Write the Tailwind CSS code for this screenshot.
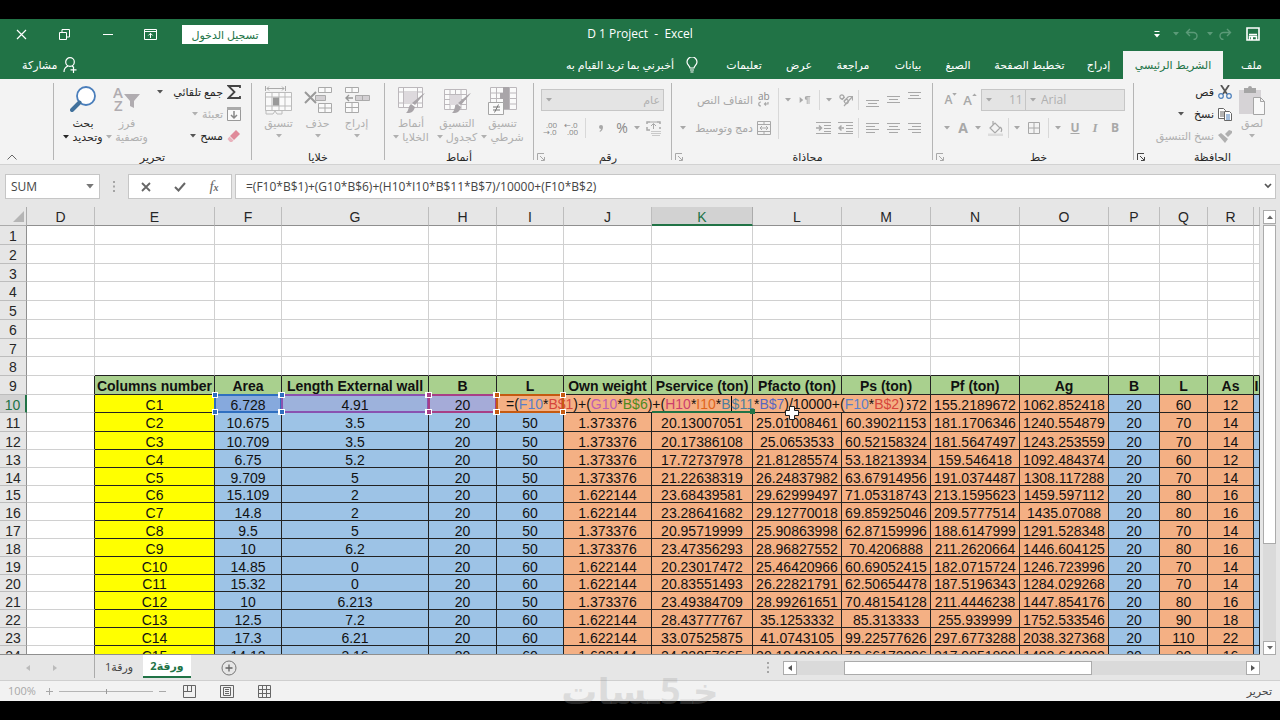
<!DOCTYPE html>
<html lang="ar">
<head>
  <meta charset="UTF-8">
  <meta name="viewport" content="width=device-width, initial-scale=1.0">
  <title>D 1 Project - Excel</title>
  <script src="https://cdn.jsdelivr.net/npm/@tailwindcss/browser@4"></script>
</head>
<body class="bg-black font-['Open_Sans','Noto_Sans','DejaVu_Sans',sans-serif] text-[11px] text-[#262626]">

<!-- Shared icons -->
<svg class="hidden">
  <symbol id="caret" viewBox="0 0 6 4"><path d="M0 0h6L3 3.5z" fill="currentColor"/></symbol>
  <symbol id="launcher" viewBox="0 0 8 8"><path d="M.5 7V.5H7M3 3l4 4M7.500 4v3.500H4" fill="none" stroke="currentColor"/></symbol>
</svg>

<div class="relative flex h-screen flex-col overflow-hidden py-[19px]">

  <!-- Title bar -->
  <header class="shrink-0 bg-[#217346] text-white">
    <div class="flex h-[30px] items-center">
      <div class="flex flex-1 items-center">
        <button class="flex w-[43px] justify-center" aria-label="Close"><svg class="size-[11px]" viewBox="0 0 11 11"><path d="M1 1l9 9M10 1l-9 9" stroke="currentColor" stroke-width="1.200"/></svg></button>
        <button class="flex w-[43px] justify-center" aria-label="Restore"><svg class="size-[11px]" viewBox="0 0 11 11"><path d="M.5 3.500h7v7h-7zM3 3.500V.5h7.500V8H7.500" fill="none" stroke="currentColor"/></svg></button>
        <button class="flex w-[43px] justify-center" aria-label="Minimize"><svg class="h-[11px] w-[10px]" viewBox="0 0 10 11"><path d="M0 5.500h10" stroke="currentColor"/></svg></button>
        <button class="flex w-[43px] justify-center" aria-label="Ribbon options"><svg class="h-[11px] w-[13px]" viewBox="0 0 13 11"><path d="M.5.5h12v10H.5zM.5 2.500h12M6.500 9V4.500M4.300 6.500l2.200-2.200 2.200 2.200" fill="none" stroke="currentColor"/></svg></button>
        <button class="ml-[10px] h-[19px] w-[86px] bg-white text-[11px] leading-[17px] text-[#217346]" dir="rtl">تسجيل الدخول</button>
      </div>
      <h1 class="whitespace-pre text-[12px]">D 1 Project  -  Excel</h1>
      <div class="flex flex-1 items-center" dir="rtl">
        <button class="mr-[20px] flex w-[14px] justify-center" aria-label="Save"><svg class="size-[14px]" viewBox="0 0 14 14"><path d="M1 1h12v12H1z" fill="none" stroke="currentColor" stroke-width="1.600"/><path d="M3 7.500h8M3.500 13V9.500h7V13" fill="none" stroke="currentColor" stroke-width="1.500"/><path d="M5 10h2v3H5z" fill="currentColor"/></svg></button>
        <button class="mr-[14px] flex w-[14px] justify-center text-[#5b9a78]" aria-label="Redo"><svg class="h-[12px] w-[14px]" viewBox="0 0 14 12"><path d="M12.500 4.500H5.500a3.500 3.500 0 0 0 0 7M9 1l3.500 3.500L9 8" fill="none" stroke="currentColor" stroke-width="1.400"/></svg></button>
        <svg class="mr-[5px] h-[4px] w-[6px] text-[#5b9a78]"><use href="#caret"/></svg>
        <button class="mr-[8px] flex w-[14px] justify-center text-[#5b9a78]" aria-label="Undo"><svg class="h-[12px] w-[14px]" viewBox="0 0 14 12"><path d="M1.500 4.500h7a3.500 3.500 0 0 1 0 7M5 1L1.500 4.500 5 8" fill="none" stroke="currentColor" stroke-width="1.400"/></svg></button>
        <svg class="mr-[6px] h-[4px] w-[6px] text-[#5b9a78]"><use href="#caret"/></svg>
        <button class="mr-[13px]" aria-label="Customize"><svg class="h-[7px] w-[6px]" viewBox="0 0 6 7"><path d="M.5.5h5" stroke="currentColor"/><path d="M0 3h6L3 6.500z" fill="currentColor"/></svg></button>
      </div>
    </div>

    <!-- Ribbon tabs -->
    <nav class="flex h-[30px] items-end text-[11px]" dir="rtl">
      <button class="h-[28px] w-[57px]">ملف</button>
      <button class="h-[28px] w-[100px] bg-[#f3f3f3] text-[#217346]">الشريط الرئيسي</button>
      <button class="h-[28px] w-[49px]">إدراج</button>
      <button class="h-[28px] w-[89px]">تخطيط الصفحة</button>
      <button class="h-[28px] w-[54px]">الصيغ</button>
      <button class="h-[28px] w-[46px]">بيانات</button>
      <button class="h-[28px] w-[64px]">مراجعة</button>
      <button class="h-[28px] w-[44px]">عرض</button>
      <button class="h-[28px] w-[66px]">تعليمات</button>
      <button class="flex h-[28px] items-center gap-[12px] pr-[13px]">
        <svg class="h-[16px] w-[12px]" viewBox="0 0 12 16"><path d="M4 11c0-2-3-3-3-6a5 5 0 0 1 10 0c0 3-3 4-3 6zM4 13h4M4.500 15h3" fill="none" stroke="currentColor" stroke-width="1.200"/></svg>
        أخبرني بما تريد القيام به
      </button>
      <button class="mr-auto flex h-[28px] items-center gap-[5px] pl-[22px]">
        <svg class="h-[16px] w-[14px]" viewBox="0 0 14 16"><circle cx="7" cy="5" r="4.300" fill="none" stroke="currentColor" stroke-width="1.200"/><path d="M1 15c0-3 1.500-5 4-6M9 9l2 1.500M10.500 10v6M7.500 12.800h6" fill="none" stroke="currentColor" stroke-width="1.200"/></svg>
        مشاركة
      </button>
    </nav>
  </header>

  <!-- Ribbon -->
  <section class="flex h-[86px] shrink-0 border-b border-[#d2d2d2] bg-[#f3f3f3] leading-[14px]" dir="rtl">

    <!-- Clipboard -->
    <div class="flex w-[146px] flex-col">
      <div class="flex h-[71px] pr-[8px]">
        <button class="flex w-[40px] flex-col items-center pt-[7px] text-[#b0b0b0]">
          <svg class="h-[30px] w-[28px]" viewBox="0 0 28 30"><path d="M1 4h22v24H1z" fill="#d6d3d6"/><path d="M6 2h4a2 2 0 0 1 4 0h4v5H6z" fill="#a5a5a5"/><path d="M15.500 11.500h7l4 4v13h-11zM22.500 11.500v4h4" fill="#f8f8f8" stroke="#a5a5a5"/></svg>
          لصق
          <svg class="mt-[4px] h-[4px] w-[6px]"><use href="#caret"/></svg>
        </button>
        <div class="flex flex-col pt-[2px]">
          <button class="flex h-[22px] items-center gap-[4px]">
            <svg class="h-[14px] w-[14px]" viewBox="0 0 14 14"><path d="M3 0l6 9M11 0L5 9" stroke="#555" stroke-width="1.800"/><circle cx="3" cy="11" r="2.300" fill="none" stroke="#4a7ebb" stroke-width="1.200"/><circle cx="11" cy="11" r="2.300" fill="none" stroke="#4a7ebb" stroke-width="1.200"/></svg>
            قص
          </button>
          <button class="flex h-[22px] items-center gap-[4px]">
            <svg class="h-[13px] w-[14px]" viewBox="0 0 14 13"><path d="M.5.5h5l2 2v8h-7zM2 4h4M2 6h4M2 8h4" fill="#fff" stroke="#666"/><path d="M6.500 3.500h5l2 2v7h-7z" fill="#fff" stroke="#666"/><path d="M8 7h4M8 9h4M8 11h4" stroke="#4a7ebb"/></svg>
            نسخ
            <svg class="mr-[6px] h-[4px] w-[6px] text-[#555]"><use href="#caret"/></svg>
          </button>
          <button class="flex h-[22px] items-center gap-[4px] text-[#b0b0b0]">
            <svg class="h-[13px] w-[14px]" viewBox="0 0 14 13"><path d="M14 1l-3-1-4 4 3 3 4-4zM0 5l3-2 7 6-3 4z" fill="currentColor"/></svg>
            نسخ التنسيق
          </button>
        </div>
      </div>
      <div class="flex h-[14px] items-center pl-[3px]"><span class="flex-1 text-center">الحافظة</span><svg class="size-[8px] text-[#444]"><use href="#launcher"/></svg></div>
    </div>
    <div class="my-[4px] w-px bg-[#b5b5b5]"></div>

    <!-- Font -->
    <div class="flex w-[200px] flex-col text-[#a8a8a8]">
      <div class="h-[71px] pt-[7px] pr-[8px]" dir="rtl">
        <div class="flex h-[28px] items-center">
          <label class="relative w-[100px]" dir="ltr"><select aria-label="Font" class="h-[22px] w-full appearance-none border border-[#c6c6c6] bg-[#e4e4e4] pl-[15px] text-[12px] text-[#b0b0b0]"><option>Arial</option></select><svg class="absolute top-[9px] left-[5px] h-[4px] w-[6px]"><use href="#caret"/></svg></label>
          <label class="relative w-[44px]" dir="ltr"><select aria-label="Size" class="h-[22px] w-full appearance-none border border-r-0 border-[#c6c6c6] bg-[#e4e4e4] pl-[27px] text-[12px] text-[#b0b0b0]"><option>11</option></select><svg class="absolute top-[9px] left-[5px] h-[4px] w-[6px]"><use href="#caret"/></svg></label>
          <button class="mr-[2px] flex w-[18px] items-start justify-center text-[13px] font-semibold" dir="ltr">A<svg class="h-[3px] w-[5px] rotate-180"><use href="#caret"/></svg></button>
          <button class="flex w-[20px] items-start justify-center text-[12px] font-semibold" dir="ltr">A<svg class="h-[3px] w-[5px]"><use href="#caret"/></svg></button>
        </div>
        <div class="flex h-[28px] items-center text-[12px]">
          <button class="w-[20px] font-bold">B</button>
          <button class="w-[20px] font-['Liberation_Serif',serif] text-[13px] font-bold italic">I</button>
          <button class="w-[20px] font-bold underline">U</button>
          <span class="flex w-[14px] justify-center"><svg class="h-[4px] w-[6px]"><use href="#caret"/></svg></span>
          <span class="mx-[2px] h-[20px] w-px bg-[#d8d8d8]"></span>
          <button class="flex w-[24px] justify-center" aria-label="Borders"><svg class="size-[12px]" viewBox="0 0 12 12"><path d="M.5.5h11v11H.5zM6 0v12M0 6h12" fill="none" stroke="currentColor"/></svg></button>
          <span class="flex w-[10px] justify-center"><svg class="h-[4px] w-[6px]"><use href="#caret"/></svg></span>
          <span class="mx-[3px] h-[20px] w-px bg-[#d8d8d8]"></span>
          <button class="flex w-[20px] justify-center" aria-label="Fill"><svg class="h-[15px] w-[15px]" viewBox="0 0 15 15"><path d="M2 7l5-5 5 5-5 5zM5 4V0M12 6c2 1 2 3 1 5" fill="none" stroke="currentColor" stroke-width="1.200"/><path d="M0 12.500h15V15H0z" fill="#dcdcdc"/></svg></button>
          <span class="flex w-[14px] justify-center"><svg class="h-[4px] w-[6px]"><use href="#caret"/></svg></span>
          <button class="w-[16px] text-[14px] font-bold">A</button>
          <span class="flex w-[16px] justify-center"><svg class="h-[4px] w-[6px]"><use href="#caret"/></svg></span>
        </div>
      </div>
      <div class="flex h-[14px] items-center pl-[3px]"><span class="flex-1 text-center text-[#262626]">خط</span><svg class="size-[8px]"><use href="#launcher"/></svg></div>
    </div>
    <div class="my-[4px] w-px bg-[#b5b5b5]"></div>

    <!-- Alignment -->
    <div class="flex w-[260px] flex-col text-[#a8a8a8]">
      <div class="flex h-[71px] pt-[7px] pr-[7px]">
        <div>
          <div class="flex h-[28px] items-center">
            <button class="flex w-[21px] justify-center pb-[8px]" aria-label="Top"><svg class="h-[8px] w-[13px]" viewBox="0 0 13 8"><path d="M0 .5h13M2 3.500h9M0 6.500h13" stroke="currentColor"/></svg></button>
            <button class="flex w-[21px] justify-center" aria-label="Middle"><svg class="h-[8px] w-[13px]" viewBox="0 0 13 8"><path d="M0 .5h13M2 3.500h9M0 6.500h13" stroke="currentColor"/></svg></button>
            <button class="flex w-[21px] justify-center pt-[8px]" aria-label="Bottom"><svg class="h-[8px] w-[13px]" viewBox="0 0 13 8"><path d="M0 .5h13M2 3.500h9M0 6.500h13" stroke="currentColor"/></svg></button>
            <span class="mr-[3px] ml-[2px] h-[20px] w-px bg-[#d8d8d8]"></span>
            <button class="flex w-[22px] justify-center" aria-label="Orientation"><svg class="h-[14px] w-[15px]" viewBox="0 0 15 14"><path d="M6 13l8-9M10.500 3.500h4V7.500" fill="none" stroke="currentColor" stroke-width="1.200"/><g transform="rotate(45 6 6)"><circle cx="3" cy="6" r="2" fill="none" stroke="currentColor" stroke-width="1.200"/><path d="M5 4v4M7.500 1v7" stroke="currentColor" stroke-width="1.200"/><circle cx="9.500" cy="6" r="2" fill="none" stroke="currentColor" stroke-width="1.200"/></g></svg></button>
            <span class="flex w-[10px] justify-center"><svg class="h-[4px] w-[6px]"><use href="#caret"/></svg></span>
            <span class="mr-[4px] ml-[3px] h-[20px] w-px bg-[#d8d8d8]"></span>
            <button class="flex w-[22px] justify-center" aria-label="Direction"><svg class="h-[8px] w-[12px]" viewBox="0 0 12 9"><path d="M0 1l4 3.500L0 8zM8 0a2.200 2.200 0 0 0 0 4.500z" fill="currentColor"/><path d="M8.500 0v9M10.500 0v9M8 .5h4" stroke="currentColor"/></svg></button>
            <span class="flex w-[12px] justify-center"><svg class="h-[4px] w-[6px]"><use href="#caret"/></svg></span>
          </div>
          <div class="flex h-[28px] items-center">
            <button class="flex w-[21px] justify-center" aria-label="Right"><svg class="h-[11px] w-[13px]" viewBox="0 0 13 11"><path d="M0 .5h13M4 3.500h9M0 6.500h13M4 9.500h9" stroke="currentColor"/></svg></button>
            <button class="flex w-[21px] justify-center" aria-label="Center"><svg class="h-[11px] w-[13px]" viewBox="0 0 13 11"><path d="M0 .5h13M2 3.500h9M0 6.500h13M2 9.500h9" stroke="currentColor"/></svg></button>
            <button class="flex w-[21px] justify-center" aria-label="Left"><svg class="h-[11px] w-[13px]" viewBox="0 0 13 11"><path d="M0 .5h13M0 3.500h9M0 6.500h13M0 9.500h9" stroke="currentColor"/></svg></button>
            <span class="mr-[3px] ml-[2px] h-[20px] w-px bg-[#d8d8d8]"></span>
            <button class="flex w-[22px] justify-center" aria-label="Decrease indent"><svg class="h-[12px] w-[15px]" viewBox="0 0 15 12"><path d="M0 .5h15M8 3.500h7M8 6.500h7M8 9.500h7M0 11.500h15" fill="none" stroke="currentColor"/><path d="M1 6h5M3.500 3.500L1 6l2.500 2.500" fill="none" stroke="currentColor" stroke-width="1.500"/></svg></button>
            <button class="flex w-[22px] justify-center" aria-label="Increase indent"><svg class="h-[12px] w-[15px]" viewBox="0 0 15 12"><path d="M0 .5h15M8 3.500h7M8 6.500h7M8 9.500h7M0 11.500h15" fill="none" stroke="currentColor"/><path d="M0 6h5M3 3.500L5.500 6 3 8.500" fill="none" stroke="currentColor" stroke-width="1.500"/></svg></button>
          </div>
        </div>
        <div class="mx-[3px] mt-[2px] h-[51px] w-px bg-[#d8d8d8]"></div>
        <div>
          <button class="flex h-[28px] items-center gap-[4px] pr-[4px]">
            <svg class="h-[16px] w-[14px]" viewBox="0 0 14 16"><text x="1" y="8" font-size="10" direction="ltr" fill="#8a8a8a">ab</text><path d="M4 10c-3 0-3 4 0 4M11 10v2H8M9 10.500L7.500 12 9 13.500" fill="none" stroke="currentColor" stroke-width="1.200"/></svg>
            التفاف النص
          </button>
          <button class="flex h-[28px] items-center gap-[4px] pr-[4px]">
            <svg class="h-[14px] w-[14px]" viewBox="0 0 14 14"><path d="M.5.5h13v13H.5zM0 3.500h14M0 10.500h14M7 0v4M7 10v4M3 7h8M5 5L3 7l2 2M9 5l2 2-2 2" fill="none" stroke="currentColor"/></svg>
            دمج وتوسيط
            <svg class="mr-[5px] h-[4px] w-[6px]"><use href="#caret"/></svg>
          </button>
        </div>
      </div>
      <div class="flex h-[14px] items-center pl-[3px]"><span class="flex-1 text-center text-[#262626]">محاذاة</span><svg class="size-[8px]"><use href="#launcher"/></svg></div>
    </div>
    <div class="my-[4px] w-px bg-[#b5b5b5]"></div>

    <!-- Number -->
    <div class="flex w-[137px] flex-col text-[#a8a8a8]">
      <div class="h-[71px] pt-[7px] pr-[7px]">
        <div class="flex h-[28px] items-center">
          <label class="relative w-[123px]"><select aria-label="Number format" class="h-[22px] w-full appearance-none border border-[#c6c6c6] bg-[#e4e4e4] pr-[3px] text-[11px] text-[#b0b0b0]"><option>عام</option></select><svg class="absolute top-[9px] left-[5px] h-[4px] w-[6px]"><use href="#caret"/></svg></label>
        </div>
        <div class="flex h-[28px] items-center">
          <button class="flex w-[22px] justify-center" aria-label="Currency"><svg class="h-[15px] w-[15px]" viewBox="0 0 15 15"><path d="M4 1H1v2M11 1h3v2M1 6v3h3M14 6v2" fill="none" stroke="currentColor" stroke-width="1.500"/><path d="M7.500 3v5M5 5l2.500-2.500L10 5M4 1h7" fill="none" stroke="currentColor"/><path d="M5 10.500h10M5 12.500h10M6 14.500h8" stroke="#c9c9c9"/></svg></button>
          <span class="flex w-[10px] justify-center"><svg class="h-[4px] w-[6px]"><use href="#caret"/></svg></span>
          <button class="w-[20px] text-[14px] text-[#888]">%</button>
          <button class="flex w-[22px] justify-center" aria-label="Comma style"><svg class="h-[7px] w-[4px]" viewBox="0 0 4 7"><path d="M2 0a2 2 0 0 1 2 2c0 2-1 4-3 5L.5 6C1.500 5.500 2 4.800 2 4a2 2 0 0 1 0-4z" fill="currentColor"/></svg></button>
          <span class="mr-[4px] ml-[3px] h-[20px] w-px bg-[#d8d8d8]"></span>
          <button class="flex w-[22px] flex-col items-center text-[8px] leading-[7px] text-[#888]" dir="ltr"><span>←.0</span><span class="pl-[3px]">.00</span></button>
          <button class="flex w-[20px] flex-col items-center text-[8px] leading-[7px] text-[#888]" dir="ltr"><span class="pl-[3px]">.00</span><span>→.0</span></button>
        </div>
      </div>
      <div class="flex h-[14px] items-center pl-[3px]"><span class="flex-1 text-center text-[#262626]">رقم</span><svg class="size-[8px]"><use href="#launcher"/></svg></div>
    </div>
    <div class="my-[4px] w-px bg-[#b5b5b5]"></div>

    <!-- Styles -->
    <div class="flex w-[148px] flex-col">
      <div class="flex h-[71px] pr-[8px] text-[#b0b0b0]">
        <button class="flex w-[45px] flex-col items-center pt-[7px]">
          <svg class="h-[30px] w-[29px]" viewBox="0 0 29 30"><path d="M2.500 1.500h26v22h-26zM8.500 1v23M15.500 1v23M21.500 1v23M2 7h26M2 12.500h26M2 18h26" fill="#fafafa" stroke="#bcb8bc"/><path d="M15 1h6v6h-6zM12 7h9v6h-9zM15 13h6v10h-6z" fill="#a9a5a9"/><path d="M.5 16.500h15v12H.5z" fill="#fafafa" stroke="#a5a5a5"/><path d="M5 21h7M5 24h7M10.500 18.500l-4 8" stroke="#777"/></svg>
          <span>تنسيق</span>
          <span class="flex items-center gap-[3px] whitespace-nowrap">شرطي<svg class="h-[4px] w-[6px]"><use href="#caret"/></svg></span>
        </button>
        <button class="flex w-[46px] flex-col items-center pt-[7px]">
          <svg class="h-[30px] w-[29px]" viewBox="0 0 29 30"><path d="M1.500 3.500h22v20h-22zM1 8.500h23M1 13.500h23M1 18.500h23M7 3v21M12.500 3v21M18 3v21" fill="#fafafa" stroke="#bcb8bc"/><path d="M7 9h11v10H7z" fill="#ddd9dd"/><path d="M28 7l-10 12-3-2L26 8zM14 18l4 3c-2 7-6 6-9 6 3-2 2-7 5-9z" fill="#a9a5a9"/></svg>
          <span>التنسيق</span>
          <span class="flex items-center gap-[3px] whitespace-nowrap">كجدول<svg class="h-[4px] w-[6px]"><use href="#caret"/></svg></span>
        </button>
        <button class="flex w-[46px] flex-col items-center pt-[7px]">
          <svg class="h-[30px] w-[29px]" viewBox="0 0 29 30"><path d="M1.500 1.500h24v20h-24zM1 6h25M1 17h25M6.500 1v21M20.500 1v21" fill="#fafafa" stroke="#bcb8bc"/><path d="M7 6h13v11H7z" fill="#ddd9dd"/><path d="M28 7l-10 12-3-2L26 8zM14 18l4 3c-2 7-6 6-9 6 3-2 2-7 5-9z" fill="#a9a5a9"/></svg>
          <span>أنماط</span>
          <span class="flex items-center gap-[3px] whitespace-nowrap">الخلايا<svg class="h-[4px] w-[6px]"><use href="#caret"/></svg></span>
        </button>
      </div>
      <div class="h-[14px] text-center">أنماط</div>
    </div>
    <div class="my-[4px] w-px bg-[#b5b5b5]"></div>

    <!-- Cells -->
    <div class="flex w-[132px] flex-col">
      <div class="flex h-[71px] pr-[8px] text-[#b0b0b0]">
        <button class="flex w-[39px] flex-col items-center pt-[7px]">
          <svg class="h-[30px] w-[26px]" viewBox="0 0 26 30"><path d="M1.500 1.500h13v5h-13zM8 1v6M1.500 16.500h13v10h-13zM8 16v11M1 21.500h14" fill="#fafafa" stroke="#aaa"/><path d="M11.500 9.500h14v5h-14zM18.500 9v6" fill="#d3d0d3" stroke="#aaa"/><path d="M2 12h7M5 9l-3 3 3 3" fill="none" stroke="#999" stroke-width="1.400"/></svg>
          <span>إدراج</span>
          <svg class="mt-[4px] h-[4px] w-[6px]"><use href="#caret"/></svg>
        </button>
        <button class="flex w-[39px] flex-col items-center pt-[7px]">
          <svg class="h-[30px] w-[28px]" viewBox="0 0 28 30"><path d="M14.500 1.500h13v5h-13zM21 1v6M14.500 17.500h13v9h-13zM21 17v10M14 22h14" fill="#fafafa" stroke="#aaa"/><path d="M11.500 9.500h10v5h-10z" fill="#d3d0d3" stroke="#aaa"/><path d="M1 6l11 11M12 6L1 17" stroke="#999" stroke-width="2"/></svg>
          <span>حذف</span>
          <svg class="mt-[4px] h-[4px] w-[6px]"><use href="#caret"/></svg>
        </button>
        <button class="flex w-[39px] flex-col items-center pt-[7px]">
          <svg class="h-[30px] w-[27px]" viewBox="0 0 27 30"><path d="M.5 0v5M20.500 0v5M2 2.500h17M4 .5l-2 2 2 2M17 .5l2 2-2 2" fill="none" stroke="#aaa"/><path d="M.5 6.500h26v18H.5zM7 6v18M14 6v18M20 6v18M0 11h27M0 20h27" fill="#fafafa" stroke="#bbb"/><path d="M8 11.500h6v8H8z" fill="#999"/><path d="M1 24v4h7l2-3 2 3h5v-4" fill="none" stroke="#bbb"/></svg>
          <span>تنسيق</span>
          <svg class="mt-[4px] h-[4px] w-[6px]"><use href="#caret"/></svg>
        </button>
      </div>
      <div class="h-[14px] text-center">خلايا</div>
    </div>
    <div class="my-[4px] w-px bg-[#b5b5b5]"></div>

    <!-- Editing -->
    <div class="flex w-[197px] flex-col">
      <div class="flex h-[71px] pr-[10px]">
        <div class="flex w-[93px] flex-col pt-[2px]">
          <button class="flex h-[22px] items-center gap-[4px]">
            <svg class="h-[14px] w-[14px]" viewBox="0 0 14 14"><path d="M13 3V1H1.500l6 6-6 6H13v-2" fill="none" stroke="#444" stroke-width="1.800"/></svg>
            <span class="whitespace-nowrap">جمع تلقائي</span>
            <svg class="mr-[6px] h-[4px] w-[6px] text-[#555]"><use href="#caret"/></svg>
          </button>
          <button class="flex h-[22px] items-center gap-[4px] text-[#b0b0b0]">
            <svg class="h-[14px] w-[14px]" viewBox="0 0 14 14"><path d="M.5.5h13v13H.5z" fill="#fafafa" stroke="#999"/><path d="M0 0h14v3H0z" fill="#aaa"/><path d="M7 4v7M4 8l3 3 3-3" fill="none" stroke="#888" stroke-width="1.500"/></svg>
            تعبئة
            <svg class="h-[4px] w-[6px]"><use href="#caret"/></svg>
          </button>
          <button class="flex h-[22px] items-center gap-[4px]">
            <svg class="h-[12px] w-[14px]" viewBox="0 0 14 12"><path d="M9 0l4 4-6 6-4-4z" fill="#e08a9a"/><path d="M2.500 6.500l4 4-1.500 1.500H3L.5 9z" fill="#e9b3bd"/></svg>
            مسح
            <svg class="h-[4px] w-[6px] text-[#555]"><use href="#caret"/></svg>
          </button>
        </div>
        <button class="flex w-[42px] flex-col items-center pt-[7px] text-[#b0b0b0]">
          <svg class="h-[30px] w-[28px]" viewBox="0 0 28 30"><text x="0" y="12" font-size="15" font-weight="600" direction="ltr" fill="#b0acb0">A</text><text x="1" y="25" font-size="15" font-weight="600" direction="ltr" fill="#b0acb0">Z</text><path d="M11 8h16l-6 7v7l-4-2v-5z" fill="#b0acb0"/></svg>
          <span>فرز</span>
          <span class="flex items-center gap-[3px] whitespace-nowrap">وتصفية<svg class="h-[4px] w-[6px]"><use href="#caret"/></svg></span>
        </button>
        <button class="flex w-[46px] flex-col items-center pt-[7px]">
          <svg class="h-[30px] w-[26px]" viewBox="0 0 26 30"><circle cx="16" cy="10" r="9" fill="#fff" stroke="#4a7ebb" stroke-width="1.800"/><path d="M9.500 16.500L2 24" stroke="#41719c" stroke-width="4" stroke-linecap="round"/></svg>
          <span>بحث</span>
          <span class="flex items-center gap-[3px] whitespace-nowrap">وتحديد<svg class="h-[4px] w-[6px]"><use href="#caret"/></svg></span>
        </button>
      </div>
      <div class="h-[14px] text-center">تحرير</div>
    </div>
    <div class="my-[4px] w-px bg-[#b5b5b5]"></div>
    <div class="flex flex-1 items-end justify-end pb-[4px] pl-[7px]">
      <button aria-label="Collapse ribbon"><svg class="h-[6px] w-[10px]" viewBox="0 0 10 6"><path d="M.5 5.500L5 1l4.500 4.500" fill="none" stroke="#666"/></svg></button>
    </div>
  </section>

  <!-- Formula bar -->
  <section class="flex h-[42px] shrink-0 items-start bg-[#e6e6e6] pt-[9px] pr-[4px] pl-[5px]">
    <label class="relative w-[95px]">
      <input aria-label="Name box" value="SUM" class="h-[25px] w-full border border-[#c6c6c6] bg-white pl-[5px] text-[12px] text-[#444]">
      <svg class="absolute top-[10px] right-[6px] h-[5px] w-[8px] text-[#777]"><use href="#caret"/></svg>
    </label>
    <svg class="mx-[13px] mt-[7px] h-[11px] w-[2px]" viewBox="0 0 2 11"><path d="M0 0h2v2H0zM0 4.500h2v2H0zM0 9h2v2H0z" fill="#a5a5a5"/></svg>
    <div class="flex h-[25px] w-[104px] items-center border border-[#c6c6c6] bg-white text-[#666]">
      <button class="flex w-[34px] justify-center" aria-label="Cancel"><svg class="size-[10px]" viewBox="0 0 10 10"><path d="M1 1l8 8M9 1L1 9" stroke="currentColor" stroke-width="1.800"/></svg></button>
      <button class="flex w-[34px] justify-center" aria-label="Enter"><svg class="h-[10px] w-[12px]" viewBox="0 0 12 10"><path d="M1 5l3.500 3.500L11 1" fill="none" stroke="currentColor" stroke-width="2"/></svg></button>
      <button class="w-[34px] font-['Liberation_Serif',serif] text-[15px] italic">f<span class="text-[10px] font-bold">x</span></button>
    </div>
    <label class="relative ml-[3px] flex-1">
      <input aria-label="Formula" value="=(F10*B$1)+(G10*B$6)+(H10*I10*B$11*B$7)/10000+(F10*B$2)" class="h-[25px] w-full border border-[#c6c6c6] bg-white pl-[10px] text-[12px] text-[#444]">
      <svg class="absolute top-[9px] right-[4px] h-[6px] w-[8px]" viewBox="0 0 8 6"><path d="M1 1l3 3 3-3" fill="none" stroke="#555" stroke-width="1.700"/></svg>
    </label>
  </section>

  <!-- Sheet -->
  <main class="flex min-h-0 flex-1 bg-[#e6e6e6]">
    <div class="relative min-w-0 flex-1 overflow-hidden border-b border-[#8f8f8f] font-['Liberation_Sans',Arial,sans-serif] text-[14px]">
      <table class="w-[1260px] table-fixed border-separate border-spacing-0 text-center leading-[14px] text-[#111]">
        <colgroup id="cols"></colgroup>
        <thead><tr id="letters" class="h-[19px]"></tr></thead>
        <tbody id="rows"></tbody>
      </table>
      <!-- Mouse pointer -->
      <svg class="absolute top-[199px] left-[785px] z-30 size-[14px]" viewBox="0 0 14 14"><path d="M4.500.5h5v4h4v5h-4v4h-5v-4h-4v-5h4z" fill="#fff" stroke="#222"/></svg>
    </div>
    <!-- Vertical scrollbar -->
    <div class="flex w-[20px] flex-col pt-[3px] pr-[4px] pl-[3px]">
      <button class="flex h-[14px] shrink-0 items-center justify-center border border-[#ababab] bg-white text-[#666]" aria-label="Scroll up"><svg class="h-[4px] w-[6px] rotate-180"><use href="#caret"/></svg></button>
      <div class="flex-1 bg-[#dadada] pt-px"><div class="h-[319px] border border-[#ababab] bg-white"></div></div>
      <button class="flex h-[14px] shrink-0 items-center justify-center border border-[#ababab] bg-white text-[#666]" aria-label="Scroll down"><svg class="h-[4px] w-[6px]"><use href="#caret"/></svg></button>
    </div>
  </main>

  <!-- Sheet tabs -->
  <section class="flex h-[25px] shrink-0 bg-[#e6e6e6] pr-[20px] text-[#444]">
    <div class="flex w-[94px] items-center gap-[23px] pl-[26px] text-[#bbb]">
      <svg class="h-[6px] w-[4px]" viewBox="0 0 4 6"><path d="M4 0v6L0 3z" fill="currentColor"/></svg>
      <svg class="h-[6px] w-[4px]" viewBox="0 0 4 6"><path d="M0 0v6l4-3z" fill="currentColor"/></svg>
    </div>
    <button class="h-[23px] w-[49px] border-l border-[#ababab] pt-[2px]" dir="rtl">ورقة1</button>
    <button class="h-[23px] w-[48px] border-b-2 border-[#217346] bg-white pt-[2px] font-bold text-[#217346]" dir="rtl">ورقة2</button>
    <button class="ml-[30px] self-center" aria-label="New sheet"><svg class="size-[16px]" viewBox="0 0 16 16"><circle cx="8" cy="8" r="7" fill="none" stroke="#777"/><path d="M8 4.500v7M4.500 8h7" stroke="#666" stroke-width="1.300"/></svg></button>
    <div class="ml-auto flex items-center">
      <svg class="mr-[14px] h-[11px] w-[2px]" viewBox="0 0 2 11"><path d="M0 0h2v2H0zM0 4.500h2v2H0zM0 9h2v2H0z" fill="#a5a5a5"/></svg>
      <button class="flex size-[14px] items-center justify-center border border-[#ababab] bg-white" aria-label="Scroll left"><svg class="h-[6px] w-[4px]" viewBox="0 0 4 6"><path d="M4 0v6L0 3z" fill="#555"/></svg></button>
      <div class="h-[14px] w-[449px] bg-[#dadada] pl-[47px]"><div class="h-full w-[248px] border border-[#ababab] bg-white"></div></div>
      <button class="flex size-[14px] items-center justify-center border border-[#ababab] bg-white" aria-label="Scroll right"><svg class="h-[6px] w-[4px]" viewBox="0 0 4 6"><path d="M0 0v6l4-3z" fill="#555"/></svg></button>
    </div>
  </section>

  <!-- Status bar -->
  <footer class="flex h-[21px] shrink-0 items-center border-t border-[#cfcfcf] bg-[#f2f2f2] px-[8px] text-[#a8a8a8]">
    <span class="w-[36px]">100%</span>
    <svg class="ml-[2px] size-[7px]" viewBox="0 0 7 7"><path d="M3.500 0v7M0 3.500h7" stroke="currentColor"/></svg>
    <input type="range" aria-label="Zoom" class="mx-[6px] h-[6px] w-[94px] appearance-none bg-[linear-gradient(#b5b5b5,#b5b5b5)] bg-[length:100%_1px] bg-center bg-no-repeat [&::-webkit-slider-thumb]:h-[5px] [&::-webkit-slider-thumb]:w-px [&::-webkit-slider-thumb]:appearance-none [&::-webkit-slider-thumb]:bg-[#999]">
    <svg class="size-[7px]" viewBox="0 0 7 7"><path d="M0 3.500h7" stroke="currentColor"/></svg>
    <div class="ml-[17px] flex gap-[24px] text-[#666]">
      <svg class="h-[13px] w-[13px]" viewBox="0 0 13 13"><path d="M.5.5h12v12H.5zM4.500.5v6M8.500.5v6M1 6.500h8" fill="none" stroke="currentColor"/></svg>
      <svg class="h-[13px] w-[14px]" viewBox="0 0 14 13"><path d="M.5.5h13v12H.5zM3.500 2.500h7v8h-7zM5 4.500h4M5 6.500h4M5 8.500h4" fill="none" stroke="currentColor"/></svg>
      <svg class="h-[13px] w-[13px]" viewBox="0 0 13 13"><path d="M.5.5h12v12H.5zM4.500 0v13M8.500 0v13M0 4.500h13M0 8.500h13" fill="none" stroke="currentColor"/></svg>
    </div>
    <span class="ml-auto text-[#444]" dir="rtl">تحرير</span>
  </footer>

  <!-- Watermark -->
  <div class="pointer-events-none absolute bottom-[6px] left-1/2 z-40 -translate-x-1/2 font-['Noto_Sans','DejaVu_Sans',sans-serif] text-[36px] leading-[46px] font-bold whitespace-nowrap text-[#999]/25" dir="rtl">خـ5ـسات</div>
</div>

<script>
  const columns = [
    ['D', 68], ['E', 120], ['F', 67], ['G', 147], ['H', 68], ['I', 67], ['J', 88], ['K', 101], ['L', 89],
    ['M', 89], ['N', 89], ['O', 89], ['P', 51], ['Q', 48], ['R', 46], ['', 6],
  ];
  const fills = ['', 'bg-[#ffff00]', 'bg-[#9dc3e6]', 'bg-[#9dc3e6]', 'bg-[#9dc3e6]', 'bg-[#9dc3e6]',
    'bg-[#f4b084]', 'bg-[#f4b084]', 'bg-[#f4b084]', 'bg-[#f4b084]', 'bg-[#f4b084]', 'bg-[#f4b084]',
    'bg-[#9dc3e6]', 'bg-[#f4b084]', 'bg-[#f4b084]', 'bg-[#9dc3e6]'];
  const titles = ['', 'Columns number', 'Area', 'Length External wall', 'B', 'L', 'Own weight', 'Pservice (ton)',
    'Pfacto (ton)', 'Ps (ton)', 'Pf (ton)', 'Ag', 'B', 'L', 'As', 'I'];
  const data = [
    ['C1', '6.728', '4.91', '20', '', '', '', '', '51.73965572', '155.2189672', '1062.852418', '20', '60', '12'],
    ['C2', '10.675', '3.5', '20', '50', '1.373376', '20.13007051', '25.01008461', '60.39021153', '181.1706346', '1240.554879', '20', '70', '14'],
    ['C3', '10.709', '3.5', '20', '50', '1.373376', '20.17386108', '25.0653533', '60.52158324', '181.5647497', '1243.253559', '20', '70', '14'],
    ['C4', '6.75', '5.2', '20', '50', '1.373376', '17.72737978', '21.81285574', '53.18213934', '159.546418', '1092.484374', '20', '60', '12'],
    ['C5', '9.709', '5', '20', '50', '1.373376', '21.22638319', '26.24837982', '63.67914956', '191.0374487', '1308.117288', '20', '70', '14'],
    ['C6', '15.109', '2', '20', '60', '1.622144', '23.68439581', '29.62999497', '71.05318743', '213.1595623', '1459.597112', '20', '80', '16'],
    ['C7', '14.8', '2', '20', '60', '1.622144', '23.28641682', '29.12770018', '69.85925046', '209.5777514', '1435.07088', '20', '80', '16'],
    ['C8', '9.5', '5', '20', '50', '1.373376', '20.95719999', '25.90863998', '62.87159996', '188.6147999', '1291.528348', '20', '70', '14'],
    ['C9', '10', '6.2', '20', '50', '1.373376', '23.47356293', '28.96827552', '70.4206888', '211.2620664', '1446.604125', '20', '80', '16'],
    ['C10', '14.85', '0', '20', '60', '1.622144', '20.23017472', '25.46420966', '60.69052415', '182.0715724', '1246.723996', '20', '70', '14'],
    ['C11', '15.32', '0', '20', '60', '1.622144', '20.83551493', '26.22821791', '62.50654478', '187.5196343', '1284.029268', '20', '70', '14'],
    ['C12', '10', '6.213', '20', '50', '1.373376', '23.49384709', '28.99261651', '70.48154128', '211.4446238', '1447.854176', '20', '80', '16'],
    ['C13', '12.5', '7.2', '20', '60', '1.622144', '28.43777767', '35.1253332', '85.313333', '255.939999', '1752.533546', '20', '90', '18'],
    ['C14', '17.3', '6.21', '20', '60', '1.622144', '33.07525875', '41.0743105', '99.22577626', '297.6773288', '2038.327368', '20', '110', '22'],
    ['C15', '14.12', '3.16', '20', '60', '1.622144', '24.22057665', '30.19420198', '72.66172996', '217.9851899', '1492.640202', '20', '80', '16'],
  ];
  // Rows that are one pixel shorter or taller than their neighbours
  const rowHeight = n => n === 15 || n === 20 ? 'h-[17px]' : n === 3 || n === 7 || n === 10 || n > 11 ? 'h-[18px]' : 'h-[19px]';

  const handles = color => ['-top-[4px] -left-[4px]', '-top-[4px] -right-[4px]', '-bottom-[4px] -left-[4px]', '-bottom-[4px] -right-[4px]']
    .map(p => `<i class="absolute ${p} size-[6px] border border-white ${color}"></i>`).join('');
  const rangeBox = (border, fill) => `<div class="absolute -top-px -right-px -bottom-px -left-px z-10 border-2 ${border}">${handles(fill)}</div>`;

  const editor = `<div class="absolute top-0 left-0 z-10 h-[17px] w-[410px] bg-[#f4b084] pt-[2px] pl-[9px] text-left whitespace-nowrap">=(<span class="text-[#5b7fc8]">F10</span>*<span class="text-[#d6453b]">B$1</span>)+(<span class="text-[#c060b0]">G10</span>*<span class="text-[#4f8a1f]">B$6</span>)+(<span class="text-[#cc3f6c]">H10</span>*<span class="text-[#e0641a]">I10</span>*<span class="text-[#4f7f9c]">B<span class="border-l border-black">$</span>11</span>*<span class="text-[#5868c0]">B$7</span>)/10000+(<span class="text-[#5b7fc8]">F10</span>*<span class="text-[#d6453b]">B$2</span>)</div>`;

  const overlays = {
    F: rangeBox('border-[#2f6fc0]', 'bg-[#2f6fc0]'),
    G: rangeBox('border-[#8a52b0]', 'bg-[#2f6fc0]'),
    H: rangeBox('border-[#a83f86]', 'bg-[#a83f86]'),
    I: editor + rangeBox('border-[#c55a11]', 'bg-[#c55a11]'),
    K: '<div class="absolute -right-px -bottom-px left-0 z-20 h-[2px] bg-[#217346]"><i class="absolute -top-[2px] -right-[2px] size-[5px] bg-[#217346]"></i></div>',
  };
  const tints = { F: 'bg-[#86a9dd]', G: 'bg-[#9db2dc]', H: 'bg-[#a5abd8]' };

  document.getElementById('cols').innerHTML =
    '<col style="width:27px">' + columns.map(([, w]) => `<col style="width:${w}px">`).join('');

  document.getElementById('letters').innerHTML =
    `<th class="border-r border-b border-[#ababab] p-0"><svg class="mr-[2px] ml-auto size-[11px]" viewBox="0 0 11 11"><path d="M11 0v11H0z" fill="#b5b5b5"/></svg></th>` +
    columns.map(([c]) => `<th class="border-r p-0 pt-[2px] font-normal ${c === 'K' ? 'border-b-2 border-r-[#ababab] border-b-[#217346] bg-[#d2d2d2] text-[#217346]' : 'border-b border-r-[#bdbdbd] border-b-[#8f8f8f] text-[#262626]'}">${c}</th>`).join('');

  let html = '';
  for (let n = 1; n <= 24; n++) {
    const head = n === 10 ? 'border-r-2 border-r-[#217346] bg-[#d2d2d2] text-[#217346]' : 'border-r border-r-[#8f8f8f] text-[#262626]';
    html += `<tr class="${rowHeight(n)}"><th class="border-b border-b-[#bdbdbd] p-0 pt-[2px] font-normal ${head}">${n}</th>`;
    columns.forEach(([c], i) => {
      let cls = 'border-[#d0d0d0] bg-white';
      let text = '';
      if (n >= 9 && i > 0) {
        cls = 'border-[#222]';
        if (n === 9) {
          cls += ' bg-[#a9d08e] font-bold';
          text = titles[i];
        } else {
          cls += ' ' + (n === 10 && tints[c] || fills[i]);
          text = data[n - 10][i - 1] || '';
          if (n === 10) text += overlays[c] || '';
        }
      } else if (n >= 9) {
        cls = 'border-b-[#d0d0d0] border-r-[#222] bg-white';
      } else if (n === 8 && i > 0) {
        cls = 'border-b-[#222] border-r-[#d0d0d0] bg-white';
      }
      html += `<td class="relative border-r border-b p-0 pt-[2px] whitespace-nowrap ${cls}">${text}</td>`;
    });
    html += '</tr>';
  }
  document.getElementById('rows').innerHTML = html;
</script>
</body>
</html>
